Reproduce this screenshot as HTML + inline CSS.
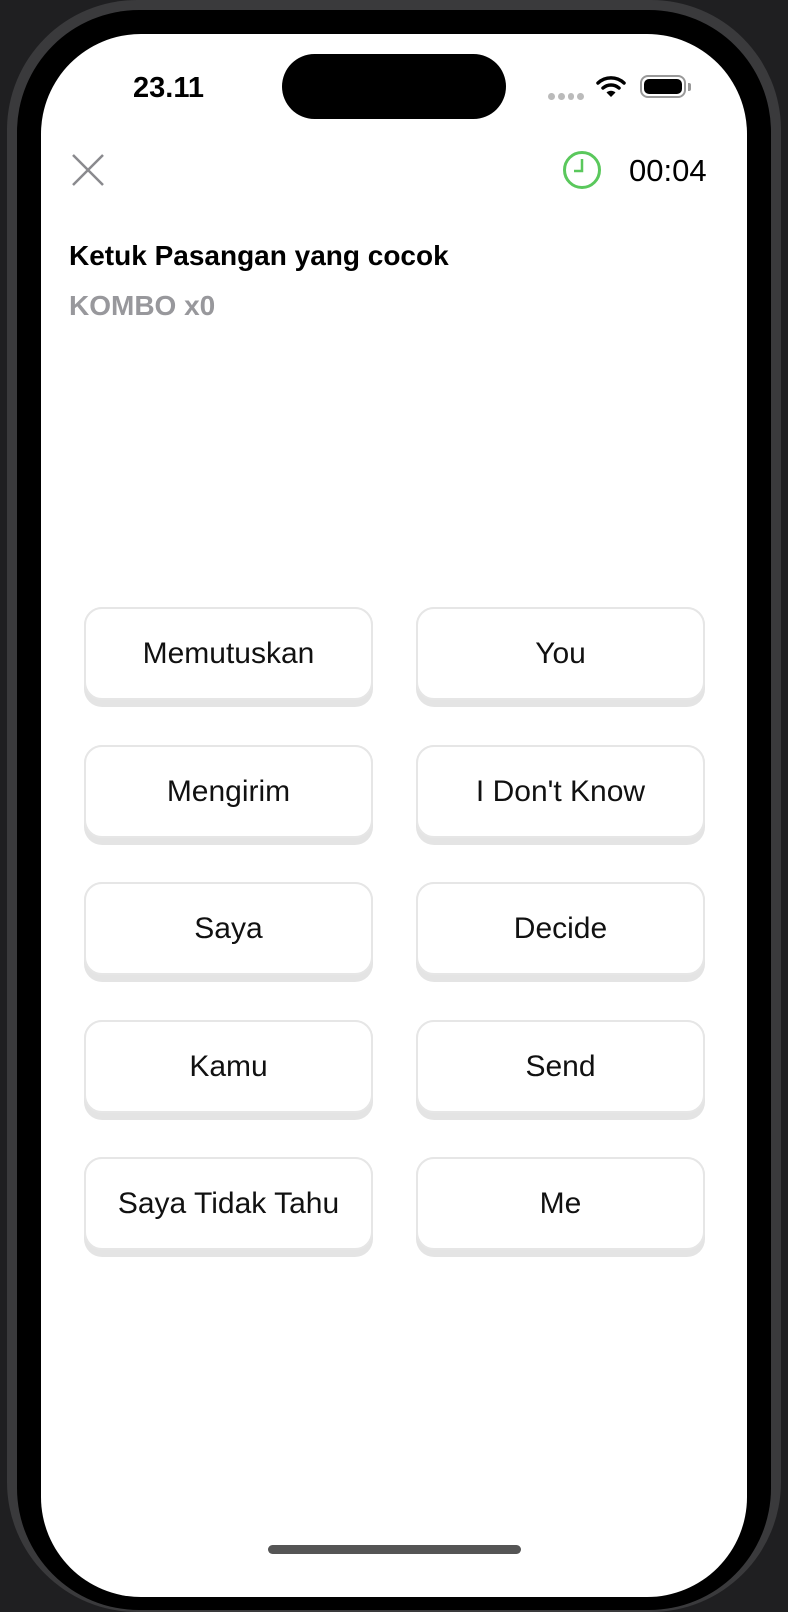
<!DOCTYPE html>
<html><head><meta charset="utf-8"><style>
*{margin:0;padding:0;box-sizing:border-box}
body{width:788px;height:1600px;background:#1f1f21;position:relative;overflow:hidden;font-family:"Liberation Sans",sans-serif}
.bezel{position:absolute;left:7px;top:0;width:774px;height:1612px;border-radius:130px;background:#3a3a3c;}
.black{position:absolute;left:17px;top:10px;width:754px;height:1600px;border-radius:122px;background:#000}
.screen{position:absolute;left:41px;top:34px;width:706px;height:1563px;border-radius:100px;background:#fff;overflow:hidden}
.island{position:absolute;left:282px;top:54px;width:224px;height:65px;border-radius:33px;background:#000}
.t{position:absolute;white-space:nowrap}
.btn{position:absolute;width:289px;height:100px;border-radius:18px;background:#e4e4e4}
.btn div{position:absolute;left:0;top:0;width:289px;height:93px;border-radius:18px;background:#fff;border:2px solid #e6e6e6;font-size:30px;color:#111;display:flex;align-items:center;justify-content:center}
</style></head><body>
<div class="bezel"></div><div class="black"></div>
<div class="screen"></div>
<div class="island"></div>
<div class="t" style="left:133px;top:72px;font-size:29px;font-weight:bold;color:#000">23.11</div>
<div style="position:absolute;left:548px;top:93px;width:36px;height:7px;display:flex;gap:3px"><span style="width:7px;height:7px;border-radius:50%;background:#bbb"></span><span style="width:7px;height:7px;border-radius:50%;background:#bbb"></span><span style="width:7px;height:7px;border-radius:50%;background:#bbb"></span><span style="width:7px;height:7px;border-radius:50%;background:#bbb"></span></div>
<svg style="position:absolute;left:596px;top:74px" width="30" height="24" viewBox="0 0 30 24"><path d="M2 9a19 19 0 0 1 26 0" stroke="#000" stroke-width="3.5" fill="none" stroke-linecap="round"/><path d="M7 14a12 12 0 0 1 16 0" stroke="#000" stroke-width="3.5" fill="none" stroke-linecap="round"/><path d="M10.5 18.5L15 23l4.5-4.5a6.5 6.5 0 0 0-9 0z" fill="#000"/></svg>
<div style="position:absolute;left:640px;top:75px;width:46px;height:23px;border:2px solid #999;border-radius:8px"><div style="position:absolute;left:2px;top:2px;width:38px;height:15px;background:#000;border-radius:5px"></div></div>
<div style="position:absolute;left:688px;top:83px;width:3px;height:8px;background:#999;border-radius:0 2px 2px 0"></div>
<svg style="position:absolute;left:71px;top:153px" width="34" height="34"><path d="M2 2L32 32M32 2L2 32" stroke="#8a8a8e" stroke-width="2.5"/></svg>
<svg style="position:absolute;left:562px;top:150px" width="40" height="40"><circle cx="20" cy="20" r="17.5" stroke="#5ac85c" stroke-width="3" fill="none"/><path d="M20 9v12h-8" stroke="#5ac85c" stroke-width="2.5" fill="none"/></svg>
<div class="t" style="left:629px;top:153px;font-size:31px;color:#000">00:04</div>
<div class="t" style="left:69px;top:240px;font-size:28px;font-weight:bold;color:#000">Ketuk Pasangan yang cocok</div>
<div class="t" style="left:69px;top:290px;font-size:28px;font-weight:bold;color:#98989c">KOMBO x0</div>
<div class="btn" style="left:84px;top:607px"><div>Memutuskan</div></div>
<div class="btn" style="left:416px;top:607px"><div>You</div></div>
<div class="btn" style="left:84px;top:745px"><div>Mengirim</div></div>
<div class="btn" style="left:416px;top:745px"><div>I Don't Know</div></div>
<div class="btn" style="left:84px;top:882px"><div>Saya</div></div>
<div class="btn" style="left:416px;top:882px"><div>Decide</div></div>
<div class="btn" style="left:84px;top:1020px"><div>Kamu</div></div>
<div class="btn" style="left:416px;top:1020px"><div>Send</div></div>
<div class="btn" style="left:84px;top:1157px"><div>Saya Tidak Tahu</div></div>
<div class="btn" style="left:416px;top:1157px"><div>Me</div></div>
<div style="position:absolute;left:268px;top:1545px;width:253px;height:9px;border-radius:5px;background:#555"></div>
</body></html>
